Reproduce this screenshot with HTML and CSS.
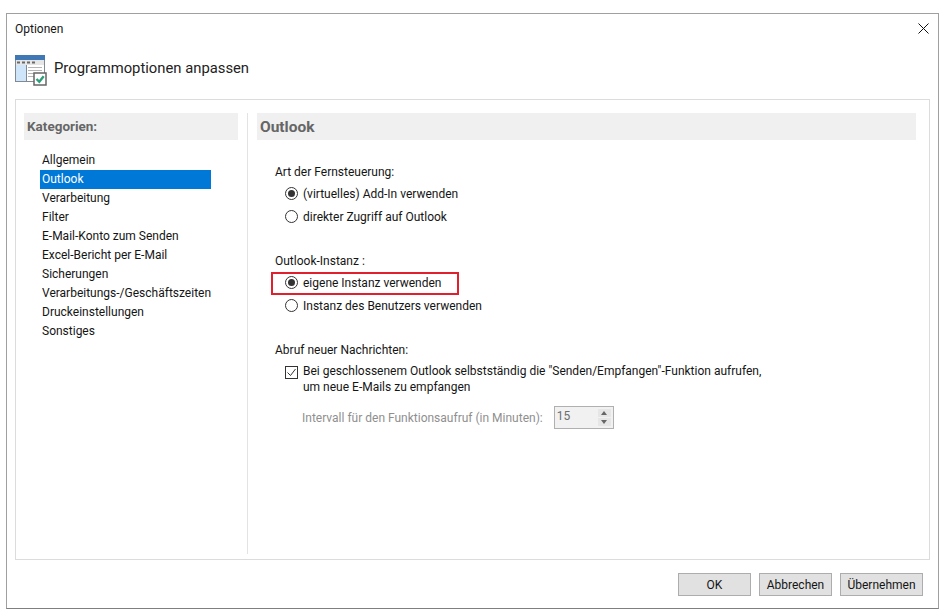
FILE: index.html
```html
<!DOCTYPE html>
<html lang="de">
<head>
<meta charset="utf-8">
<title>Optionen</title>
<link rel="stylesheet" href="styles.css">
</head>
<body>
<div class="window">
  <div class="titlebar">
    <span class="title">Optionen</span>
    <svg class="close" width="11" height="11" viewBox="0 0 11 11"><path d="M0.500 0.500L10.500 10.500M10.500 0.500L0.500 10.500" stroke="#111" stroke-width="1" fill="none"/></svg>
  </div>
  <div class="heading">
    <svg class="heading-icon" width="32" height="31" viewBox="0 0 32 31">
      <rect x="0.500" y="0.500" width="29" height="26" fill="#fff" stroke="#7f8a94"/>
      <rect x="0" y="0" width="30" height="5" fill="#3f78b5"/>
      <rect x="1" y="5" width="28" height="5" fill="#e6e6e6"/>
      <path d="M2 6.500h3v2h-3zM7 6.500h3v2h-3zM12 6.500h3v2h-3zM17 6.500h3v2h-3z" fill="#6a6a6a"/>
      <rect x="1" y="10" width="10" height="16" fill="#cfe6fa"/>
      <path d="M11.500 10v16" stroke="#7f8a94"/>
      <path d="M13 12.500h14M13 15.500h14M13 18.500h9M13 21.500h6" stroke="#b5b5b5"/>
      <rect x="19" y="18" width="12" height="12" fill="#fff" stroke="#666" stroke-width="1.500"/>
      <path d="M21.500 24l2.800 2.800 4.400-5.600" stroke="#2e9e7a" stroke-width="2.400" fill="none"/>
    </svg>
    <span class="heading-text">Programmoptionen anpassen</span>
  </div>
  <div class="panel">
    <aside class="sidebar">
      <div class="section-head">Kategorien:</div>
      <ul class="cats">
        <li>Allgemein</li>
        <li class="selected">Outlook</li>
        <li>Verarbeitung</li>
        <li>Filter</li>
        <li>E-Mail-Konto zum Senden</li>
        <li>Excel-Bericht per E-Mail</li>
        <li>Sicherungen</li>
        <li>Verarbeitungs-/Geschäftszeiten</li>
        <li>Druckeinstellungen</li>
        <li>Sonstiges</li>
      </ul>
    </aside>
    <div class="divider"></div>
    <main class="content">
      <div class="section-head section-head-large">Outlook</div>
      <div class="options">
        <section class="group">
          <div class="group-label">Art der Fernsteuerung:</div>
          <div class="radio-row"><span class="radio on"></span>(virtuelles) Add-In verwenden</div>
          <div class="radio-row"><span class="radio"></span>direkter Zugriff auf Outlook</div>
        </section>
        <section class="group group-next">
          <div class="group-label">Outlook-Instanz :</div>
          <div class="radio-row"><span class="radio on"></span>eigene Instanz verwenden<span class="highlight"></span></div>
          <div class="radio-row"><span class="radio"></span>Instanz des Benutzers verwenden</div>
        </section>
        <section class="group group-next">
          <div class="group-label">Abruf neuer Nachrichten:</div>
          <div class="check-row">
            <span class="check"><svg width="13" height="13" viewBox="0 0 13 13"><path d="M2.500 6.500l3 3 5-6.500" stroke="#333" stroke-width="1" fill="none"/></svg></span>
            <span class="check-text">Bei geschlossenem Outlook selbstständig die "Senden/Empfangen"-Funktion aufrufen,<br>um neue E-Mails zu empfangen</span>
          </div>
          <div class="interval">
            <span>Intervall für den Funktionsaufruf (in Minuten):</span>
            <span class="spinner">
              <span class="spin-value">15</span>
              <span class="spin-btns">
                <span class="spin-btn"><i class="up"></i></span>
                <span class="spin-btn"><i class="down"></i></span>
              </span>
            </span>
          </div>
        </section>
      </div>
    </main>
  </div>
  <div class="footer">
    <button class="btn">OK</button>
    <button class="btn">Abbrechen</button>
    <button class="btn btn-wide">Übernehmen</button>
  </div>
</div>
</body>
</html>
```
FILE: styles.css
```css
* { box-sizing: border-box; }
html, body { margin: 0; padding: 0; background: #fff; }
body { font-family: Roboto, "Noto Sans", sans-serif; font-size: 12px; color: #151515; width: 947px; height: 615px; overflow: hidden; padding: 13px 0 0 6px; }
.window { width: 933px; height: 596px; border: 1px solid #a0a0a0; border-bottom-color: #7f7f7f; background: #fff; display: flex; flex-direction: column; }
.titlebar { height: 30px; display: flex; align-items: center; justify-content: space-between; padding: 0 9px 0 8px; }
.title { font-size: 12px; }
.close { display: block; margin-top: -2px; }
.heading { height: 55px; display: flex; align-items: flex-start; padding: 11px 0 0 8px; }
.heading-text { font-size: 14.800px; margin: 3px 0 0 7px; color: #222; line-height: 20px; }
.heading-icon { display: block; }
.panel { margin: 0 8px; height: 461px; border: 1px solid #dcdcdc; display: flex; padding: 13px 13px 5px 8px; }
.sidebar { width: 214px; }
.divider { width: 1px; background: #e3e3e3; margin: 0 9px 0 9px; }
.content { flex: 1; }
.section-head { height: 27px; line-height: 27px; background: #f0f0f0; color: #666; font-weight: 700; font-size: 13.500px; padding-left: 3px; }
.section-head-large { font-size: 15.500px; line-height: 29px; }
.cats { list-style: none; margin: 11px 0 0; padding: 0 27px 0 16px; }
.cats li { height: 19px; line-height: 19px; padding-left: 2px; white-space: nowrap; }
.cats li.selected { background: #0078d7; color: #fff; }
.options { padding: 22px 0 0 18px; }
.group-next { margin-top: 23px; }
.group-label { height: 20px; line-height: 20px; }
.radio-row { height: 23px; display: flex; align-items: center; padding-left: 10px; position: relative; white-space: nowrap; }
.radio { width: 13px; height: 13px; border: 1px solid #333; border-radius: 50%; margin-right: 5px; flex: none; display: flex; align-items: center; justify-content: center; }
.radio.on::after { content: ""; width: 7px; height: 7px; border-radius: 50%; background: #333; }
.highlight { position: absolute; left: -4px; top: 1px; width: 188px; height: 23px; border: 2px solid #e0202c; }
.check-row { display: flex; padding: 3px 0 0 10px; }
.check { width: 13px; height: 13px; border: 1px solid #333; margin: 3px 5px 0 0; flex: none; }
.check svg { display: block; margin: -1px; }
.check-text { line-height: 16px; white-space: nowrap; }
.interval { display: flex; align-items: center; padding: 11px 0 0 27px; color: #8f8f8f; white-space: nowrap; gap: 11px; }
.spinner { width: 60px; height: 23px; border: 1px solid #b0b0b0; background: #f1f1f1; display: flex; justify-content: space-between; }
.spin-value { padding-left: 2px; line-height: 19px; color: #6d6d6d; }
.spin-btns { width: 13px; display: flex; flex-direction: column; margin: 2px 2px 2px 0; gap: 1px; }
.spin-btn { flex: 1; background: #e6e6e6; display: flex; align-items: center; justify-content: center; }
.spin-btn i { display: block; width: 0; height: 0; border-left: 3.500px solid transparent; border-right: 3.500px solid transparent; }
.spin-btn .up { border-bottom: 4px solid #666; }
.spin-btn .down { border-top: 4px solid #666; }
.footer { display: flex; justify-content: flex-end; gap: 8px; padding: 13px 15px 0 0; }
.btn { font: inherit; color: #151515; width: 73px; height: 23px; padding: 0; background: #e1e1e1; border: 1px solid #adadad; border-radius: 0; }
.btn-wide { width: 83px; }
```
